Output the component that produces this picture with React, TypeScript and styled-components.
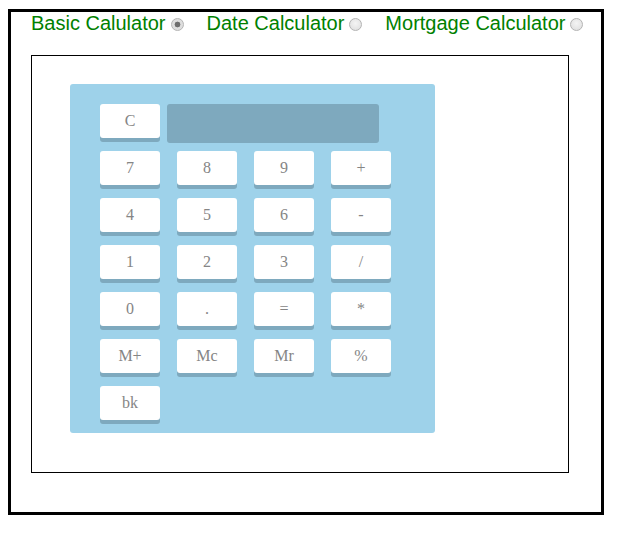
import React, { useState } from "react";
import styled, { createGlobalStyle } from "styled-components";

const GlobalStyle = createGlobalStyle`
  body {
    margin: 9px 8px 0 8px;
    font-family: "Liberation Sans", Arial, sans-serif;
    background: #ffffff;
  }
`;

const Outer = styled.div`
  box-sizing: border-box;
  width: 596px;
  height: 506px;
  border: 3px solid #000;
  padding: 0 20px;
`;

const TabBar = styled.div`
  display: flex;
  align-items: center;
  height: 23px;
  font-size: 20px;
  line-height: 23px;
  color: #008000;
`;

const Option = styled.label`
  display: inline-flex;
  align-items: center;
  cursor: pointer;
  white-space: nowrap;
`;

const Radio = styled.input`
  appearance: none;
  -webkit-appearance: none;
  box-sizing: border-box;
  width: 13px;
  height: 13px;
  margin: 0 23px 0 5px;
  border-radius: 50%;
  border: 1px solid #b4b4b4;
  background: radial-gradient(circle at 50% 40%, #f4f4f4 0%, #dcdcdc 100%);
  position: relative;
  top: 0.5px;
  &:checked {
    background: radial-gradient(circle, #6e6e6e 0 2.6px, #dedede 3.2px 100%);
  }
`;

const Frame = styled.div`
  box-sizing: border-box;
  width: 538px;
  height: 418px;
  margin-top: 20px;
  border: 1px solid #000;
  padding: 28px 0 0 38px;
`;

const Panel = styled.div`
  box-sizing: border-box;
  width: 365px;
  height: 349px;
  background: #9ed2ea;
  border-radius: 3px;
  padding: 20px 0 0 30px;
`;

const TopRow = styled.div`
  display: flex;
  align-items: flex-start;
  gap: 7px;
  height: 39px;
`;

const Screen = styled.div`
  width: 212px;
  height: 39px;
  background: #7ea9be;
  border-radius: 3px;
`;

const Keys = styled.div`
  display: grid;
  grid-template-columns: repeat(4, 60px);
  grid-auto-rows: 34px;
  column-gap: 17px;
  row-gap: 13px;
  margin-top: 8px;
`;

const Key = styled.button`
  width: 60px;
  height: 34px;
  padding: 0;
  border: none;
  border-radius: 3px;
  background: #ffffff;
  box-shadow: 0 4px 0 #7ea9be;
  font-family: "Liberation Serif", "Times New Roman", serif;
  font-size: 16px;
  color: #858585;
  cursor: pointer;
`;

const keys = [
  "7", "8", "9", "+",
  "4", "5", "6", "-",
  "1", "2", "3", "/",
  "0", ".", "=", "*",
  "M+", "Mc", "Mr", "%",
  "bk",
];

const options = ["Basic Calulator", "Date Calculator", "Mortgage Calculator"];

export default function App() {
  const [mode, setMode] = useState(0);
  return (
    <>
      <GlobalStyle />
      <Outer>
        <TabBar>
          {options.map((o, i) => (
            <Option key={o}>
              {o}
              <Radio
                type="radio"
                name="calc"
                checked={mode === i}
                onChange={() => setMode(i)}
              />
            </Option>
          ))}
        </TabBar>
        <Frame>
          <Panel>
            <TopRow>
              <Key>C</Key>
              <Screen />
            </TopRow>
            <Keys>
              {keys.map((k) => (
                <Key key={k}>{k}</Key>
              ))}
            </Keys>
          </Panel>
        </Frame>
      </Outer>
    </>
  );
}
